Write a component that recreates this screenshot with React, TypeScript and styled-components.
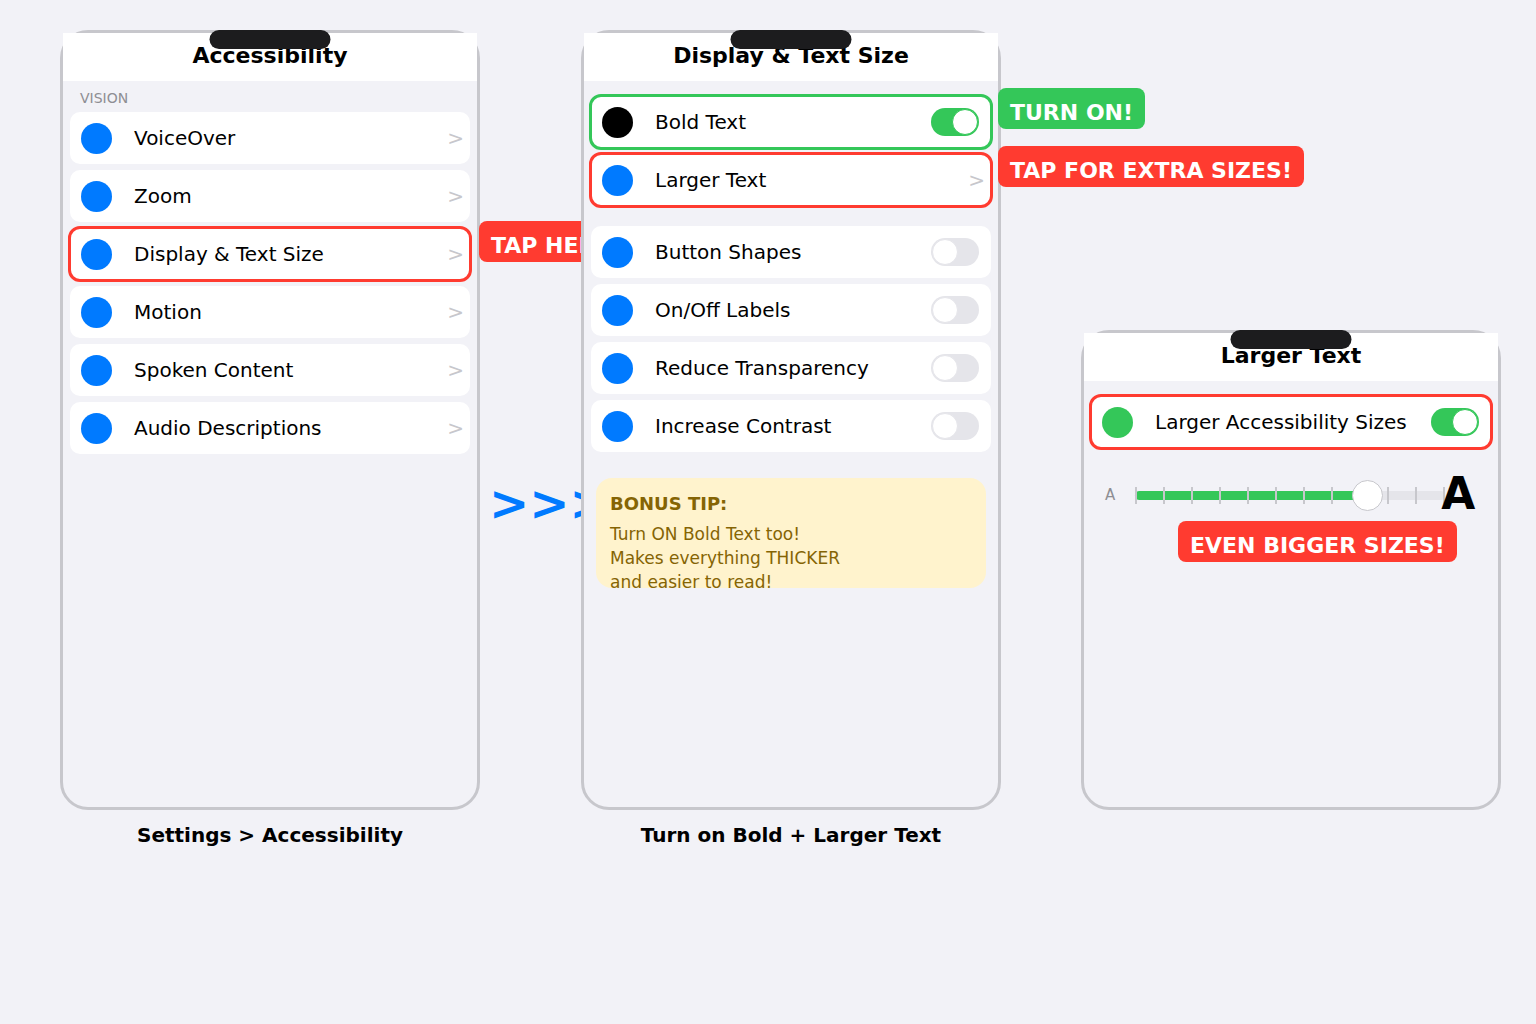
import React from "react";
import styled, { createGlobalStyle } from "styled-components";

const GlobalStyle = createGlobalStyle`
  html, body {
    margin: 0;
    padding: 0;
    background: #f2f2f7;
    font-family: "DejaVu Sans", "Noto Sans", sans-serif;
  }
`;

const Page = styled.div`
  min-height: 1024px;
  display: flex;
  align-items: flex-start;
  padding: 30px 0 0 60px;
  box-sizing: border-box;
`;

const Column = styled.div<{ $ml?: number; $mt?: number }>`
  position: relative;
  display: flex;
  flex-direction: column;
  align-items: center;
  margin-left: ${(p) => p.$ml ?? 0}px;
  margin-top: ${(p) => p.$mt ?? 0}px;
`;

const Phone = styled.div<{ $h: number }>`
  position: relative;
  width: 420px;
  height: ${(p) => p.$h}px;
  box-sizing: border-box;
  border: 3px solid #c7c7cc;
  border-radius: 28px;
  background: #f2f2f7;
  display: flex;
  flex-direction: column;
`;

const Notch = styled.div`
  position: absolute;
  top: -3px;
  left: 50%;
  transform: translateX(-50%);
  width: 121px;
  height: 19px;
  border-radius: 10px;
  background: #1c1c1e;
  z-index: 2;
`;

const Header = styled.div`
  height: 48px;
  background: #fff;
  display: flex;
  align-items: center;
  justify-content: center;
  padding-bottom: 4px;
  box-sizing: border-box;
  font-size: 22px;
  font-weight: bold;
  color: #000;
`;

const SectionLabel = styled.div`
  margin: 8px 0 5px 17px;
  line-height: 18px;
  font-size: 14px;
  color: #8e8e93;
`;

const RowList = styled.div<{ $mt?: number }>`
  display: flex;
  flex-direction: column;
  gap: 6px;
  padding: 0 7px;
  margin-top: ${(p) => p.$mt ?? 0}px;
`;

const Row = styled.div<{ $outline?: string }>`
  height: 52px;
  background: #fff;
  border-radius: 10px;
  display: flex;
  align-items: center;
  padding: 0 12px 0 11px;
  outline: ${(p) => (p.$outline ? `3px solid ${p.$outline}` : "none")};
  outline-offset: -1px;
`;

const Dot = styled.span<{ $color: string }>`
  width: 31px;
  height: 31px;
  border-radius: 50%;
  background: ${(p) => p.$color};
  margin-right: 22px;
  flex-shrink: 0;
`;

const RowLabel = styled.span`
  flex: 1;
  font-size: 20px;
  color: #000;
  white-space: nowrap;
`;

const Chevron = styled.span`
  font-size: 20px;
  color: #c7c7cc;
  margin-right: -6px;
`;

const Track = styled.span<{ $on: boolean }>`
  width: 48px;
  height: 28px;
  border-radius: 14px;
  box-sizing: border-box;
  padding: 1px;
  display: flex;
  justify-content: ${(p) => (p.$on ? "flex-end" : "flex-start")};
  background: ${(p) => (p.$on ? "#34c759" : "#e5e5ea")};
`;

const Knob = styled.span<{ $on: boolean }>`
  width: 26px;
  height: 26px;
  border-radius: 50%;
  box-sizing: border-box;
  background: #fff;
  border: 1.5px solid ${(p) => (p.$on ? "#34c759" : "#e5e5ea")};
`;

const Callout = styled.div<{ $bg: string; $left?: number; $top?: number }>`
  position: absolute;
  left: ${(p) => p.$left ?? 0}px;
  top: ${(p) => p.$top ?? 0}px;
  height: 41px;
  box-sizing: border-box;
  padding: 8px 12px 0;
  border-radius: 8px;
  background: ${(p) => p.$bg};
  color: #fff;
  font-size: 22px;
  font-weight: bold;
  display: flex;
  align-items: center;
  white-space: nowrap;
`;

const InlineCallout = styled.div<{ $bg: string }>`
  align-self: flex-start;
  margin: 4px 0 0 94px;
  height: 41px;
  box-sizing: border-box;
  padding: 8px 12px 0;
  border-radius: 8px;
  background: ${(p) => p.$bg};
  color: #fff;
  font-size: 22px;
  font-weight: bold;
  display: flex;
  align-items: center;
  white-space: nowrap;
`;

const Arrows = styled.div`
  position: absolute;
  left: 429px;
  top: 449px;
  font-size: 48px;
  line-height: 1;
  font-weight: bold;
  color: #007aff;
  white-space: nowrap;
`;

const TipBox = styled.div`
  margin: 26px 12px 0;
  height: 110px;
  box-sizing: border-box;
  padding: 15px 14px 0;
  border-radius: 16px;
  background: #fff3cd;
  color: #856404;
`;

const TipTitle = styled.div`
  font-size: 18px;
  font-weight: bold;
  margin-bottom: 8px;
`;

const TipLine = styled.div`
  font-size: 17px;
  line-height: 24px;
  white-space: nowrap;
`;

const SliderRow = styled.div`
  display: flex;
  align-items: center;
  height: 44px;
  margin-top: 25px;
  padding-left: 21px;
`;

const SmallA = styled.span`
  font-size: 15px;
  color: #8e8e93;
`;

const BigA = styled.span`
  font-size: 44px;
  font-weight: bold;
  color: #000;
  margin-left: -4px;
  position: relative;
  top: -2px;
`;

const SliderTrack = styled.div`
  position: relative;
  width: 310px;
  height: 9px;
  margin-left: 20px;
  border-radius: 4.5px;
  background: #e5e5ea;
`;

const SliderFill = styled.div`
  height: 100%;
  border-radius: 4.5px;
  background: #34c759;
`;

const Ticks = styled.div`
  position: absolute;
  left: 0;
  right: 0;
  top: -4px;
  height: 17px;
  display: flex;
  justify-content: space-between;
`;

const Tick = styled.span`
  width: 2px;
  height: 17px;
  background: #c7c7cc;
`;

const SliderKnob = styled.div`
  position: absolute;
  top: 50%;
  width: 31px;
  height: 31px;
  margin: -15.5px 0 0 -15.5px;
  box-sizing: border-box;
  border-radius: 50%;
  background: #fff;
  border: 1.5px solid #c7c7cc;
`;

const Caption = styled.div`
  margin-top: 13px;
  font-size: 20px;
  font-weight: bold;
  color: #000;
`;

const Toggle = ({ on }: { on: boolean }) => (
  <Track $on={on}>
    <Knob $on={on} />
  </Track>
);

const visionItems = [
  "VoiceOver",
  "Zoom",
  "Display & Text Size",
  "Motion",
  "Spoken Content",
  "Audio Descriptions",
];

const displayToggles = [
  "Button Shapes",
  "On/Off Labels",
  "Reduce Transparency",
  "Increase Contrast",
];

const sliderValue = 0.748;
const tickCount = 12;

export default function App() {
  return (
    <>
      <GlobalStyle />
      <Page>
        <Column>
          <Phone $h={780}>
            <Notch />
            <Header>Accessibility</Header>
            <SectionLabel>VISION</SectionLabel>
            <RowList>
              {visionItems.map((item) => (
                <Row
                  key={item}
                  $outline={item === "Display & Text Size" ? "#ff3b30" : undefined}
                >
                  <Dot $color="#007aff" />
                  <RowLabel>{item}</RowLabel>
                  <Chevron>&gt;</Chevron>
                </Row>
              ))}
            </RowList>
          </Phone>
          <Caption>Settings &gt; Accessibility</Caption>
          <Callout $bg="#ff3b30" $left={419} $top={191}>
            TAP HERE!
          </Callout>
          <Arrows>&gt;&gt;&gt;</Arrows>
        </Column>

        <Column $ml={101}>
          <Phone $h={780}>
            <Notch />
            <Header>Display &amp; Text Size</Header>
            <RowList $mt={15}>
              <Row $outline="#34c759">
                <Dot $color="#000" />
                <RowLabel>Bold Text</RowLabel>
                <Toggle on />
              </Row>
              <Row $outline="#ff3b30">
                <Dot $color="#007aff" />
                <RowLabel>Larger Text</RowLabel>
                <Chevron>&gt;</Chevron>
              </Row>
            </RowList>
            <RowList $mt={20}>
              {displayToggles.map((item) => (
                <Row key={item}>
                  <Dot $color="#007aff" />
                  <RowLabel>{item}</RowLabel>
                  <Toggle on={false} />
                </Row>
              ))}
            </RowList>
            <TipBox>
              <TipTitle>BONUS TIP:</TipTitle>
              <TipLine>Turn ON Bold Text too!</TipLine>
              <TipLine>Makes everything THICKER</TipLine>
              <TipLine>and easier to read!</TipLine>
            </TipBox>
          </Phone>
          <Caption>Turn on Bold + Larger Text</Caption>
          <Callout $bg="#34c759" $left={417} $top={58}>
            TURN ON!
          </Callout>
          <Callout $bg="#ff3b30" $left={417} $top={116}>
            TAP FOR EXTRA SIZES!
          </Callout>
        </Column>

        <Column $ml={80} $mt={300}>
          <Phone $h={480}>
            <Notch />
            <Header>Larger Text</Header>
            <RowList $mt={15}>
              <Row $outline="#ff3b30">
                <Dot $color="#34c759" />
                <RowLabel>Larger Accessibility Sizes</RowLabel>
                <Toggle on />
              </Row>
            </RowList>
            <SliderRow>
              <SmallA>A</SmallA>
              <SliderTrack>
                <SliderFill style={{ width: `${sliderValue * 100}%` }} />
                <Ticks>
                  {Array.from({ length: tickCount }).map((_, i) => (
                    <Tick key={i} />
                  ))}
                </Ticks>
                <SliderKnob style={{ left: `${sliderValue * 100}%` }} />
              </SliderTrack>
              <BigA>A</BigA>
            </SliderRow>
            <InlineCallout $bg="#ff3b30">EVEN BIGGER SIZES!</InlineCallout>
          </Phone>
        </Column>
      </Page>
    </>
  );
}
